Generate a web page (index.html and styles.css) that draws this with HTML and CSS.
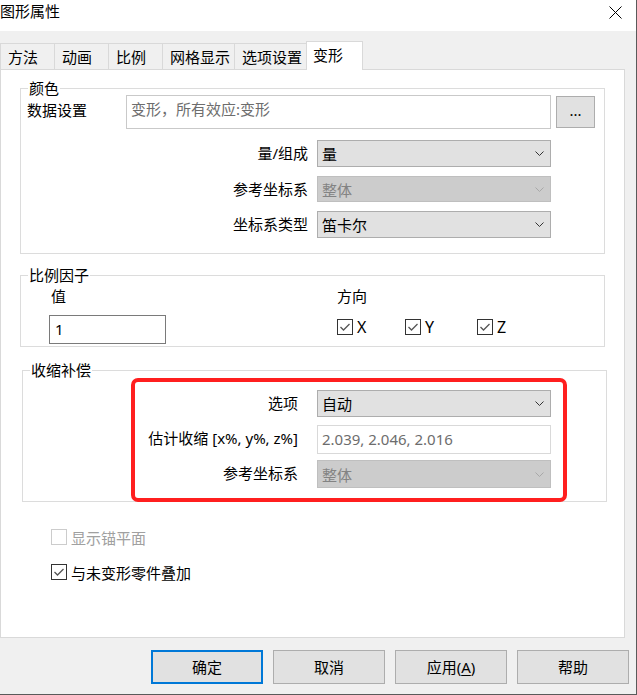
FILE: index.html
```html
<!DOCTYPE html>
<html lang="zh-CN">
<head>
<meta charset="utf-8">
<title>图形属性</title>
<link rel="stylesheet" href="styles.css">
</head>
<body>
<div class="window">
  <div class="titlebar">
    <span class="title">图形属性</span>
    <svg class="close" width="13" height="13" viewBox="0 0 13 13"><path d="M0.5 0.5 L12.5 12.5 M12.5 0.5 L0.5 12.5" stroke="#000" stroke-width="1" fill="none"/></svg>
  </div>
  <div class="tabs">
    <div class="tab">方法</div>
    <div class="tab">动画</div>
    <div class="tab">比例</div>
    <div class="tab">网格显示</div>
    <div class="tab">选项设置</div>
    <div class="tab active">变形</div>
  </div>
  <div class="panel">
    <div class="group g-color">
      <span class="legend">颜色</span>
      <div class="data-row">
        <span class="data-label">数据设置</span>
        <div class="textarea">变形，所有效应:变形</div>
        <div class="btn-dots">...</div>
      </div>
      <div class="form-grid g1">
        <span class="lbl">量/组成</span>
        <div class="select h27"><span>量</span><svg width="9" height="5" viewBox="0 0 9 5"><polyline points="0.5,0.5 4.5,4.5 8.5,0.5" fill="none" stroke="#333"/></svg></div>
        <span class="lbl mt9">参考坐标系</span>
        <div class="select disabled h26 mt9"><span>整体</span><svg width="9" height="5" viewBox="0 0 9 5"><polyline points="0.5,0.5 4.5,4.5 8.5,0.5" fill="none" stroke="#a8a8a8"/></svg></div>
        <span class="lbl mt8">坐标系类型</span>
        <div class="select h27 mt8"><span>笛卡尔</span><svg width="9" height="5" viewBox="0 0 9 5"><polyline points="0.5,0.5 4.5,4.5 8.5,0.5" fill="none" stroke="#333"/></svg></div>
      </div>
    </div>

    <div class="group g-scale">
      <span class="legend">比例因子</span>
      <div class="scale-cols">
        <div class="col-value">
          <div class="col-title pl2">值</div>
          <div class="input-value">1</div>
        </div>
        <div class="col-dir">
          <div class="col-title">方向</div>
          <div class="checks">
            <label class="check w68"><span class="box"><svg width="14" height="14" viewBox="0 0 14 14"><polyline points="2.5,7 5.5,10 11.5,4" fill="none" stroke="#555" stroke-width="1.3"/></svg></span>X</label>
            <label class="check w72"><span class="box"><svg width="14" height="14" viewBox="0 0 14 14"><polyline points="2.5,7 5.5,10 11.5,4" fill="none" stroke="#555" stroke-width="1.3"/></svg></span>Y</label>
            <label class="check"><span class="box"><svg width="14" height="14" viewBox="0 0 14 14"><polyline points="2.5,7 5.5,10 11.5,4" fill="none" stroke="#555" stroke-width="1.3"/></svg></span>Z</label>
          </div>
        </div>
      </div>
    </div>

    <div class="group g-shrink">
      <span class="legend">收缩补偿</span>
      <div class="form-grid g3">
        <span class="lbl">选项</span>
        <div class="select h27"><span>自动</span><svg width="9" height="5" viewBox="0 0 9 5"><polyline points="0.5,0.5 4.5,4.5 8.5,0.5" fill="none" stroke="#333"/></svg></div>
        <span class="lbl mt8">估计收缩 [x%, y%, z%]</span>
        <div class="readonly mt8">2.039, 2.046, 2.016</div>
        <span class="lbl mt6">参考坐标系</span>
        <div class="select disabled h28 mt6"><span>整体</span><svg width="9" height="5" viewBox="0 0 9 5"><polyline points="0.5,0.5 4.5,4.5 8.5,0.5" fill="none" stroke="#a8a8a8"/></svg></div>
      </div>
      <div class="highlight"></div>
    </div>

    <label class="opt disabled-opt first"><span class="box"></span>显示锚平面</label>
    <label class="opt second"><span class="box"><svg width="14" height="14" viewBox="0 0 14 14"><polyline points="2.5,7 5.5,10 11.5,4" fill="none" stroke="#555" stroke-width="1.3"/></svg></span>与未变形零件叠加</label>
  </div>
  <div class="footer">
    <div class="btn default">确定</div>
    <div class="btn">取消</div>
    <div class="btn">应用(<u>A</u>)</div>
    <div class="btn">帮助</div>
  </div>
</div>
</body>
</html>
```

FILE: styles.css
```css
html, body {
  margin: 0;
  padding: 0;
  background: #f0f0f0;
}
body {
  font-family: "Noto Sans", "Noto Sans CJK SC", sans-serif;
  font-size: 15px;
  color: #000;
}
.window {
  width: 637px;
  height: 695px;
  box-sizing: border-box;
  border-right: 1px solid #5a5a5a;
  border-bottom: 1px solid #5a5a5a;
  background: #f0f0f0;
  display: flex;
  flex-direction: column;
}
.titlebar {
  height: 31px;
  background: #fff;
  display: flex;
  justify-content: space-between;
  align-items: flex-start;
  padding-right: 14px;
}
.title {
  line-height: 22px;
  font-family: "Noto Sans CJK SC", sans-serif;
}
.close {
  margin-top: 6px;
}
.tabs {
  display: flex;
  align-items: flex-end;
  height: 28px;
  margin-top: 10px;
}
.tab {
  box-sizing: border-box;
  height: 26px;
  min-width: 55px;
  padding: 0 4px 0 7px;
  border: 1px solid #d9d9d9;
  border-bottom: none;
  margin-right: -1px;
  line-height: 25px;
  font-family: "Noto Sans CJK SC", sans-serif;
  background: #f0f0f0;
}
.tab.active {
  position: relative;
  z-index: 1;
  height: 29px;
  min-width: 57px;
  margin-bottom: -1px;
  background: #fff;
  padding-left: 6px;
  line-height: 25px;
}
.panel {
  box-sizing: border-box;
  width: 625px;
  height: 569px;
  background: #fff;
  border: 1px solid #d9d9d9;
  padding-left: 19px;
}
.group {
  position: relative;
  box-sizing: border-box;
  width: 585px;
  border: 1px solid #dcdcdc;
}
.legend {
  position: absolute;
  top: -11px;
  left: 7px;
  background: #fff;
  padding: 0 1px;
  line-height: 20px;
  font-family: "Noto Sans CJK SC", sans-serif;
}
.g-color {
  margin-top: 18px;
  padding: 6px 0 15px 6px;
}
.data-row {
  display: flex;
  align-items: flex-start;
}
.data-label {
  width: 99px;
  line-height: 20px;
  margin-top: 5px;
  font-family: "Noto Sans CJK SC", sans-serif;
}
.textarea {
  box-sizing: border-box;
  width: 425px;
  height: 34px;
  border: 1px solid #c9c9c9;
  padding: 3px 4px;
  line-height: 20px;
  color: #6d6d6d;
}
.btn-dots {
  box-sizing: border-box;
  width: 39px;
  height: 32px;
  margin: 1px 0 0 5px;
  background: #e1e1e1;
  border: 1px solid #adadad;
  text-align: center;
  line-height: 26px;
  font-size: 15px;
}
.form-grid {
  display: grid;
  align-items: start;
}
.g1 {
  grid-template-columns: 281px 234px;
  column-gap: 9px;
  margin-top: 11px;
}
.lbl {
  text-align: right;
  line-height: 27px;
  white-space: nowrap;
}
.select {
  box-sizing: border-box;
  display: flex;
  align-items: center;
  justify-content: space-between;
  background: #e1e1e1;
  border: 1px solid #adadad;
  padding: 0 6px 0 4px;
}
.select.disabled {
  background: #cccccc;
  border-color: #bfbfbf;
  color: #838383;
}
.h26 { height: 26px; }
.h27 { height: 27px; }
.h28 { height: 28px; }
.mt6 { margin-top: 6px; }
.mt8 { margin-top: 8px; }
.mt9 { margin-top: 9px; }

.g-scale {
  margin-top: 21px;
  padding: 10px 0 2px 0;
}
.scale-cols {
  display: flex;
}
.col-value {
  width: 316px;
  padding-left: 28px;
  box-sizing: border-box;
}
.col-title {
  line-height: 20px;
}
.pl2 { padding-left: 2px; }
.input-value {
  box-sizing: border-box;
  width: 117px;
  height: 29px;
  margin-top: 9px;
  border: 1px solid #7a7a7a;
  padding-left: 5px;
  line-height: 27px;
}
.checks {
  display: flex;
  margin-top: 13px;
}
.check {
  display: flex;
  align-items: center;
  gap: 4px;
  line-height: 16px;
  font-size: 16px;
}
.w68 { width: 68px; }
.w72 { width: 72px; }
.box {
  box-sizing: border-box;
  width: 16px;
  height: 16px;
  border: 1px solid #333;
  display: flex;
  align-items: center;
  justify-content: center;
  background: #fff;
}
.g-shrink {
  margin-top: 23px;
  margin-left: 2px;
  padding: 19px 0 13px 0;
}
.g3 {
  grid-template-columns: 275px 234px;
  column-gap: 19px;
}
.readonly {
  box-sizing: border-box;
  height: 29px;
  border: 1px solid #d9d9d9;
  padding-left: 4px;
  line-height: 27px;
  color: #6d6d6d;
}
.highlight {
  position: absolute;
  left: 108px;
  top: 7px;
  width: 436px;
  height: 124px;
  box-sizing: border-box;
  border: 4px solid #ff1f1f;
  border-radius: 7px;
}
.opt {
  display: flex;
  align-items: center;
  gap: 4px;
  height: 20px;
  margin-left: 31px;
  font-family: "Noto Sans CJK SC", sans-serif;
}
.opt.first { margin-top: 25px; }
.opt.second { margin-top: 15px; }
.disabled-opt { color: #a0a0a0; }
.disabled-opt .box { border-color: #cccccc; }
.footer {
  display: flex;
  justify-content: flex-end;
  gap: 10px;
  padding-right: 7px;
  margin-top: 12px;
}
.btn {
  box-sizing: border-box;
  width: 112px;
  height: 34px;
  background: #e1e1e1;
  border: 1px solid #adadad;
  text-align: center;
  line-height: 32px;
}
.btn.default {
  border: 2px solid #0078d7;
  line-height: 30px;
}
.btn u {
  text-decoration-thickness: 1px;
  text-underline-offset: 2px;
}
```
